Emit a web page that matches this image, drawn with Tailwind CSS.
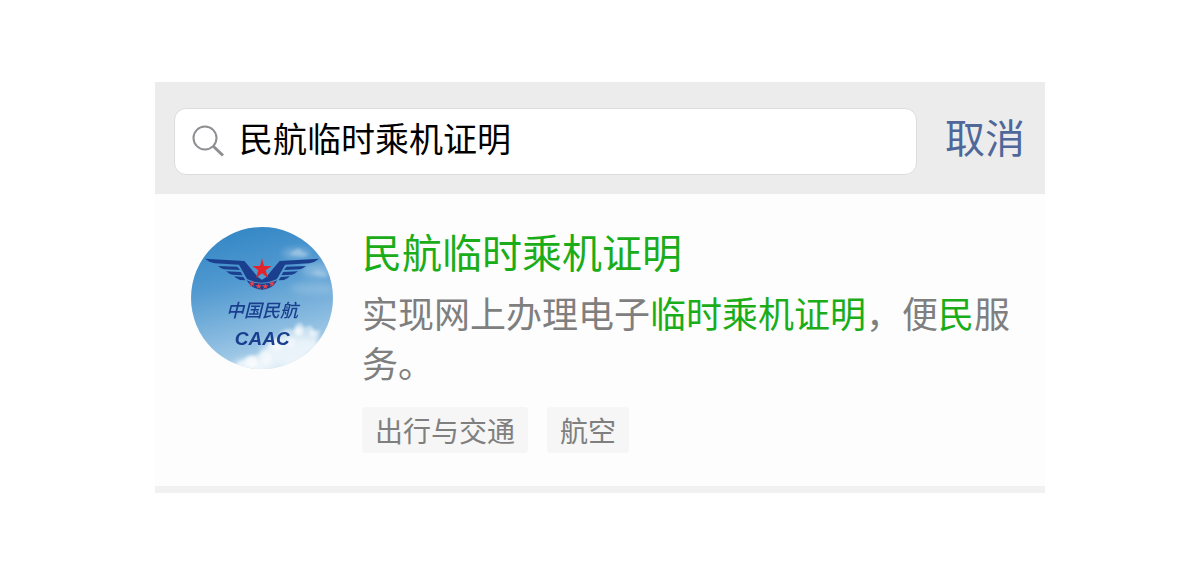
<!DOCTYPE html>
<html lang="zh-CN">
<head>
  <meta charset="UTF-8" />
  <meta name="viewport" content="width=device-width, initial-scale=1.0" />
  <title>民航临时乘机证明</title>
  <script src="https://cdn.jsdelivr.net/npm/@tailwindcss/browser@4"></script>
</head>
<body class="bg-white font-['Noto_Sans_CJK_SC',sans-serif]">

  <main class="max-w-[890px] mx-auto mt-[82px]">
    <!-- search bar -->
    <form class="flex items-start bg-[#ececec] pl-[19px] pr-5 pt-[26px] pb-[19px]">
      <div class="flex flex-1 min-w-0 items-start gap-[15px] h-[67px] pl-[17px] pr-4 bg-white border border-[#dcdcdc] rounded-xl">
        <svg class="size-8 shrink-0 mt-4" viewBox="0 0 32 32" fill="none" stroke="#8e8e93" aria-hidden="true">
          <circle cx="13" cy="13" r="11.5" stroke-width="2" />
          <path d="M21 21 L31 30.5" stroke-width="3" />
        </svg>
        <input type="text" aria-label="搜索" value="民航临时乘机证明" class="flex-1 min-w-0 mt-1 bg-transparent text-[34px] leading-[50px] text-black outline-none" />
      </div>
      <button type="button" class="ml-[28px] text-[40px] leading-[56px] text-[#4f6899]">取消</button>
    </form>

    <!-- result -->
    <article class="flex items-start gap-[29px] bg-[#fdfdfd] border-b-[7px] border-[#f1f1f1] pl-9 pr-[30px] pt-[33px] pb-[33px]">
      <svg class="size-[142px] shrink-0" viewBox="33 21 426 426" role="img" aria-label="中国民航 CAAC">
        <defs>
          <linearGradient id="sky" x1="0.35" y1="0" x2="0.6" y2="1">
            <stop offset="0" stop-color="#3487c6" />
            <stop offset="0.35" stop-color="#5199d0" />
            <stop offset="0.7" stop-color="#86b9df" />
            <stop offset="1" stop-color="#b5d6ec" />
          </linearGradient>
          <filter id="soft" x="-30%" y="-30%" width="160%" height="160%"><feGaussianBlur stdDeviation="5" /></filter>
          <filter id="haze" x="-30%" y="-30%" width="160%" height="160%"><feGaussianBlur stdDeviation="11" /></filter>
          <clipPath id="disc"><circle cx="246" cy="234" r="213" /></clipPath>
        </defs>
        <g clip-path="url(#disc)">
          <rect x="33" y="21" width="426" height="426" fill="url(#sky)" />
          <!-- clouds -->
          <g fill="#fff" filter="url(#haze)">
            <ellipse cx="350" cy="100" rx="42" ry="12" opacity=".35" />
            <ellipse cx="410" cy="150" rx="45" ry="22" opacity=".25" />
            <ellipse cx="400" cy="205" rx="70" ry="16" opacity=".18" />
            <ellipse cx="350" cy="395" rx="110" ry="45" opacity=".5" />
            <ellipse cx="220" cy="435" rx="60" ry="20" opacity=".6" />
          </g>
          <g fill="#fff" filter="url(#soft)">
            <path d="M330 104 l14 -14 14 -5 12 12 18 5 -18 8 z" opacity=".25" />
            <path d="M392 160 l22 -10 24 8 6 14 -26 -2 z" opacity=".2" />
            <path d="M168 452 L172 428 190 418 208 408 232 405 246 392 262 386 264 372 284 356 300 350 302 336 322 326 340 330 350 312 362 308 374 322 392 316 404 332 420 330 416 350 408 362 410 384 386 392 370 412 350 424 330 440 300 452 Z" opacity=".5" />
            <circle cx="215" cy="424" r="18" opacity=".6" />
            <circle cx="292" cy="376" r="17" opacity=".5" />
            <circle cx="356" cy="334" r="13" opacity=".7" />
            <circle cx="330" cy="368" r="16" opacity=".4" />
            <circle cx="258" cy="414" r="19" opacity=".4" />
            <circle cx="398" cy="340" r="10" opacity=".5" />
          </g>
          <!-- winged emblem -->
          <g fill="#1b3f8f">
            <g id="wing">
              <path d="M75 116 L193 123 L208 140 L234 172 L247 180 L247 188 Q222 188 201 177 L177 134 L104 130 Q86 126 75 116 Z" />
              <path d="M114 138 L172 140 L180 150 L132 148 Q121 145 114 138 Z" />
              <path d="M138 154 L182 156 L188 166 L156 164 Q146 161 138 154 Z" />
              <path d="M162 169 L190 171 L196 181 L180 180 Q170 177 162 169 Z" />
              <path d="M200 181 Q222 191 247 191 L247 209 Q214 209 200 181 Z" />
            </g>
            <use href="#wing" transform="translate(492 0) scale(-1 1)" />
          </g>
          <path d="M246 115 L252 138 L275 138 L257 151 L264 174 L246 160 L228 174 L235 151 L217 138 L240 138 Z" fill="#e5232b" />
          <g fill="#e8404a">
            <path id="star" d="M216 181 l2.5 7 7.5 0 -6 5 2.500 7 -6.500 -4.500 -6.500 4.500 2.500 -7 -6 -5 7.500 0 z" />
            <use href="#star" x="20" y="8" />
            <use href="#star" x="40" y="8" />
            <use href="#star" x="60" y="0" />
          </g>
          <text x="246" y="291" text-anchor="middle" font-size="54" font-weight="500" font-style="italic" fill="#1b3f8f">中国民航</text>
          <text x="247" y="374" text-anchor="middle" font-family="Liberation Sans, sans-serif" font-size="57" font-weight="700" font-style="italic" fill="#1b3f8f">CAAC</text>
        </g>
      </svg>

      <div class="flex-1 min-w-0">
        <h2><a href="#" class="block text-[40px] leading-[48px] text-[#1aad19]">民航临时乘机证明</a></h2>
        <p class="mt-3 text-[36px] leading-[50px] text-[#7f7f7f]">实现网上办理电子<span class="text-[#1aad19]">临时乘机证明</span>，便<span class="text-[#1aad19]">民</span>服务。</p>
        <ul class="flex flex-wrap gap-[19px] mt-5 text-[28px] leading-[46px] text-[#7f7f7f]">
          <li class="px-[13px] bg-[#f6f6f6] rounded">出行与交通</li>
          <li class="px-[13px] bg-[#f6f6f6] rounded">航空</li>
        </ul>
      </div>
    </article>
  </main>

</body>
</html>
